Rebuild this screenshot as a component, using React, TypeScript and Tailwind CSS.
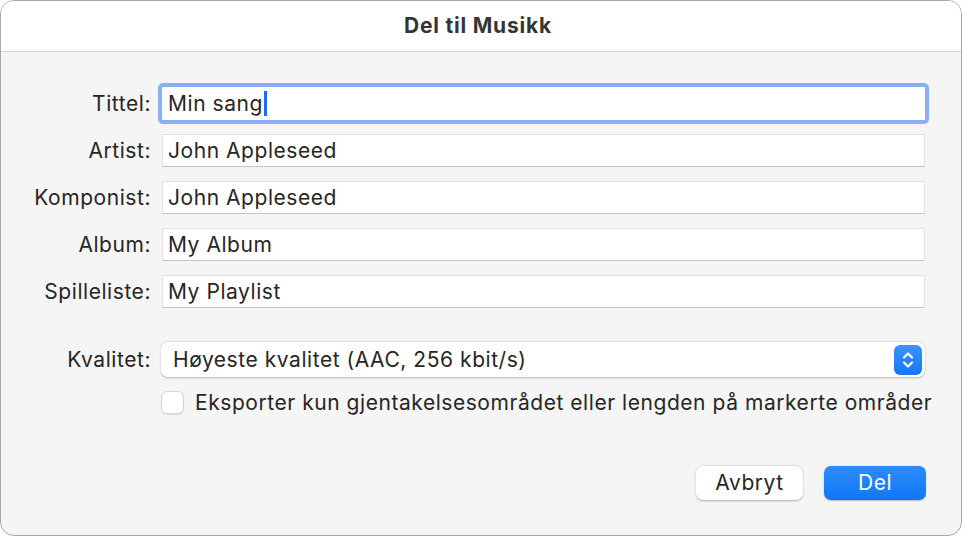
import React from 'react';

const font = { fontFamily: 'Inter, "Noto Sans", "Liberation Sans", sans-serif' };

const fields = [
  { label: 'Tittel:', value: 'Min sang', focused: true },
  { label: 'Artist:', value: 'John Appleseed' },
  { label: 'Komponist:', value: 'John Appleseed' },
  { label: 'Album:', value: 'My Album' },
  { label: 'Spilleliste:', value: 'My Playlist' },
];

const Stepper = () => (
  <div className="w-[28px] h-[30px] rounded-[6px] bg-gradient-to-b from-[#3a93fb] to-[#1377f4] flex items-center justify-center">
    <svg width="14" height="20" viewBox="0 0 14 20" fill="none" stroke="white" strokeWidth="2.2" strokeLinecap="round" strokeLinejoin="round">
      <path d="M3 7.5 L7 3.5 L11 7.5" />
      <path d="M3 12.5 L7 16.5 L11 12.5" />
    </svg>
  </div>
);

export default function App() {
  return (
    <div className="w-[963px] h-[537px] bg-white" style={font}>
      <div className="w-[962px] h-[536px] border border-[#a9a9a9] rounded-[14px] overflow-hidden flex flex-col bg-[#f5f5f5]">
        {/* Title bar */}
        <div className="h-[51px] shrink-0 bg-white border-b border-[#d6d6d6] flex items-center justify-center pr-[6px]">
          <span className="text-[21px] font-bold text-[#353535] tracking-[0.8px]">Del til Musikk</span>
        </div>

        <div className="flex flex-col pt-[35px] text-[21px] tracking-[0.55px] text-[#262626]">
          {/* Text fields */}
          <div className="grid grid-cols-[150px_763px] gap-x-[11px] gap-y-[14px]">
            {fields.map((f) => (
              <React.Fragment key={f.label}>
                <div className="h-[33px] flex items-center justify-end">{f.label}</div>
                {f.focused ? (
                  <div className="h-[33px] relative">
                    <div className="absolute -inset-[4px] rounded-[5px] border-[4px] border-[#8aaff5]" />
                    <div className="h-full bg-white flex items-center px-[6px]">
                      <span>{f.value}</span>
                      <span className="w-[3px] h-[25px] bg-[#1b6df5] ml-[1px]" />
                    </div>
                  </div>
                ) : (
                  <div className="h-[33px] bg-white border border-[#e2e2e2] border-b-[#c4c4c4] flex items-center px-[5px]">
                    {f.value}
                  </div>
                )}
              </React.Fragment>
            ))}
          </div>

          {/* Quality */}
          <div className="grid grid-cols-[150px_764px] gap-x-[10px] mt-[34px]">
            <div className="h-[35px] flex items-center justify-end">Kvalitet:</div>
            <div className="h-[35px] bg-white rounded-[7px] shadow-[0_0.5px_2px_rgba(0,0,0,0.25)] flex items-center justify-between pl-[12px] pr-[3px]">
              <span>Høyeste kvalitet (AAC, 256 kbit/s)</span>
              <Stepper />
            </div>
            <div />
            <div className="h-[23px] flex items-center gap-[11px] mt-[14px]">
              <div className="w-[23px] h-[23px] shrink-0 rounded-[6px] bg-white border border-[#d4d4d4] shadow-[0_0.5px_1px_rgba(0,0,0,0.1)]" />
              <span className="whitespace-nowrap">Eksporter kun gjentakelsesområdet eller lengden på markerte områder</span>
            </div>
          </div>

          {/* Buttons */}
          <div className="flex justify-end gap-[21px] pr-[35px] mt-[52px]">
            <button className="w-[107px] h-[34px] rounded-[7px] bg-white shadow-[0_0.5px_2px_rgba(0,0,0,0.3)] text-[21px] tracking-[0.55px] text-[#262626]">
              Avbryt
            </button>
            <button className="w-[102px] h-[34px] rounded-[7px] bg-gradient-to-b from-[#2a8cfc] to-[#0f76f5] shadow-[0_0.5px_1.5px_rgba(0,0,0,0.25)] text-[21px] tracking-[0.55px] text-white">
              Del
            </button>
          </div>
        </div>
      </div>
    </div>
  );
}
